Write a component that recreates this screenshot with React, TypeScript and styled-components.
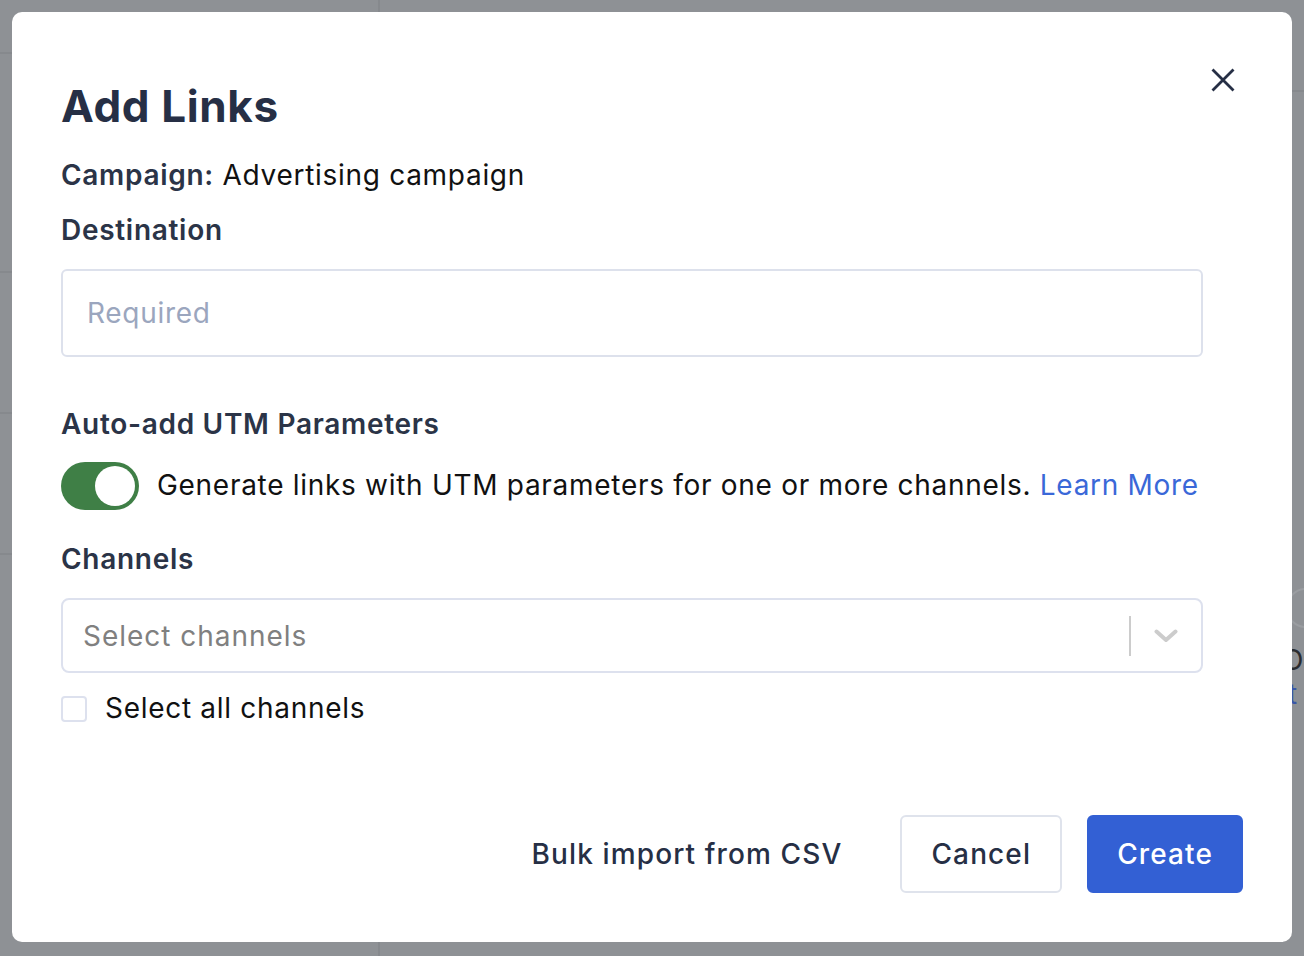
import styled, { createGlobalStyle } from "styled-components";

const GlobalStyle = createGlobalStyle`
  html, body {
    margin: 0;
    padding: 0;
  }
  body {
    font-family: Inter, Lato, "Liberation Sans", sans-serif;
    letter-spacing: 0.044em;
    background: #8e9195;
    overflow: hidden;
  }
`;

const App = () => {
  return (
    <>
      <GlobalStyle />
      <Backdrop>
        <Sidebar>
          <SideRow $h={52} />
          <SideRow $h={217} />
          <SideRow $h={139} />
          <SideRow $h={139} />
        </Sidebar>
        <Main>
          <MainTop />
          <Peek>
            <PeekRing />
            <PeekText>O</PeekText>
            <PeekLink>t</PeekLink>
          </Peek>
        </Main>
      </Backdrop>

      <Modal role="dialog" aria-labelledby="add-links-title">
        <Header>
          <Title id="add-links-title">Add Links</Title>
          <CloseButton aria-label="Close">
            <svg width="24" height="24" viewBox="0 0 24 24" fill="none">
              <path d="M1.5 1.5L22.5 22.5M22.5 1.5L1.5 22.5" stroke="#262f45" strokeWidth="2.8" />
            </svg>
          </CloseButton>
        </Header>

        <Body>
          <Campaign>
            <strong>Campaign:</strong> Advertising campaign
          </Campaign>

          <Label $gap={22}>Destination</Label>
          <TextInput placeholder="Required" />

          <Label $gap={51}>Auto-add UTM Parameters</Label>
          <ToggleRow>
            <Toggle role="switch" aria-checked="true">
              <Knob />
            </Toggle>
            <Hint>
              Generate links with UTM parameters for one or more channels.{" "}
              <LearnMore href="#">Learn More</LearnMore>
            </Hint>
          </ToggleRow>

          <Label $gap={33}>Channels</Label>
          <Select>
            <Placeholder>Select channels</Placeholder>
            <Separator />
            <ChevronBox>
              <svg width="24" height="14" viewBox="0 0 24 14" fill="none">
                <path d="M2.5 2.5L12 11L21.5 2.5" stroke="#cccccc" strokeWidth="4" strokeLinecap="round" strokeLinejoin="round" />
              </svg>
            </ChevronBox>
          </Select>

          <CheckRow>
            <CheckBox />
            <span>Select all channels</span>
          </CheckRow>
        </Body>

        <Footer>
          <Button $variant="text">Bulk import from CSV</Button>
          <Button $variant="outline">Cancel</Button>
          <Button $variant="primary">Create</Button>
        </Footer>
      </Modal>
    </>
  );
};

const Backdrop = styled.div`
  display: flex;
  height: 956px;
  background: #8e9195;
`;

const Sidebar = styled.aside`
  width: 378px;
  flex-shrink: 0;
  border-right: 2px solid #86898d;
  display: flex;
  flex-direction: column;
`;

const SideRow = styled.div<{ $h: number }>`
  height: ${(p) => p.$h}px;
  flex-shrink: 0;
  border-bottom: 2px solid #86898d;
`;

const Main = styled.main`
  flex: 1;
  display: flex;
  flex-direction: column;
  align-items: flex-end;
`;

const MainTop = styled.div`
  align-self: stretch;
  height: 90px;
  border-bottom: 2px solid #86898d;
`;

const Peek = styled.div`
  margin-top: 496px;
  width: 22px;
  display: flex;
  flex-direction: column;
  font-size: 28px;
  line-height: 1.2;
`;

const PeekRing = styled.div`
  width: 36px;
  height: 36px;
  border-radius: 50%;
  border: 2px solid #9a9da1;
  margin-left: 4px;
`;

const PeekText = styled.span`
  color: #2a2c30;
  margin-top: 16px;
`;

const PeekLink = styled.span`
  color: #3a57a8;
  margin-left: 6px;
`;

const Modal = styled.div`
  position: fixed;
  top: 12px;
  left: 12px;
  width: 1280px;
  height: 930px;
  box-sizing: border-box;
  padding: 0 49px 49px 49px;
  background: #ffffff;
  border-radius: 10px;
  display: flex;
  flex-direction: column;
`;

const Header = styled.div`
  display: flex;
  justify-content: space-between;
  align-items: flex-start;
  padding-top: 52px;
`;

const Title = styled.h1`
  margin: 16px 0 0;
  font-size: 44px;
  line-height: 1.2;
  font-weight: 700;
  letter-spacing: 0.014em;
  color: #262f45;
`;

const CloseButton = styled.button`
  width: 32px;
  height: 32px;
  margin-right: 4px;
  padding: 0;
  border: none;
  background: none;
  display: flex;
  align-items: center;
  justify-content: center;
  cursor: pointer;
`;

const Body = styled.div`
  display: flex;
  flex-direction: column;
  padding-right: 40px;
`;

const Campaign = styled.p`
  margin: 26px 0 0;
  font-size: 28px;
  line-height: 1.2;
  color: #111111;

  strong {
    font-weight: 600;
    color: #2b3447;
  }
`;

const Label = styled.h3<{ $gap: number }>`
  margin: ${(p) => p.$gap}px 0 0;
  font-size: 28px;
  line-height: 1.2;
  font-weight: 600;
  color: #2b3447;
`;

const TextInput = styled.input`
  margin-top: 21px;
  height: 88px;
  box-sizing: border-box;
  border: 2px solid #dde1ec;
  border-radius: 6px;
  padding: 0 24px;
  font-family: inherit;
  font-size: 28px;
  letter-spacing: inherit;
  color: #111111;
  outline: none;

  &::placeholder {
    color: #9ba6be;
  }
`;

const ToggleRow = styled.div`
  margin-top: 20px;
  display: flex;
  align-items: center;
  gap: 18px;
`;

const Toggle = styled.button`
  width: 78px;
  height: 48px;
  flex-shrink: 0;
  border: none;
  border-radius: 24px;
  background: #3f7f46;
  padding: 0 4px;
  display: flex;
  align-items: center;
  justify-content: flex-end;
  cursor: pointer;
`;

const Knob = styled.span`
  width: 40px;
  height: 40px;
  border-radius: 50%;
  background: #ffffff;
`;

const Hint = styled.p`
  margin: 0;
  font-size: 28px;
  line-height: 1.2;
  color: #111111;
`;

const LearnMore = styled.a`
  color: #3a68d8;
  text-decoration: none;
`;

const Select = styled.div`
  margin-top: 22px;
  height: 75px;
  box-sizing: border-box;
  border: 2px solid #dde1ee;
  border-radius: 8px;
  display: flex;
  align-items: center;
`;

const Placeholder = styled.span`
  flex: 1;
  padding-left: 20px;
  font-size: 28px;
  letter-spacing: 0.035em;
  color: #808080;
`;

const Separator = styled.span`
  width: 2px;
  height: 40px;
  background: #cccccc;
`;

const ChevronBox = styled.span`
  width: 70px;
  display: flex;
  justify-content: center;
  align-items: center;
`;

const CheckRow = styled.label`
  margin-top: 19px;
  display: flex;
  align-items: center;
  gap: 18px;
  font-size: 28px;
  line-height: 1.2;
  color: #111111;
`;

const CheckBox = styled.span`
  width: 26px;
  height: 26px;
  box-sizing: border-box;
  border: 2px solid #dde1ee;
  border-radius: 4px;
  background: #ffffff;
`;

const Footer = styled.div`
  margin-top: auto;
  display: flex;
  justify-content: flex-end;
  align-items: center;
  gap: 25px;
`;

const buttonPadding = { text: "0 31px", outline: "0 29px", primary: "0 28px" };

const Button = styled.button<{ $variant: "text" | "outline" | "primary" }>`
  height: 78px;
  box-sizing: border-box;
  border-radius: 6px;
  font-family: inherit;
  font-size: 28px;
  font-weight: 500;
  letter-spacing: 0.04em;
  cursor: pointer;
  padding: ${(p) => buttonPadding[p.$variant]};
  border: 2px solid
    ${(p) =>
      p.$variant === "primary" ? "#3360d4" : p.$variant === "outline" ? "#dfe3ec" : "transparent"};
  background: ${(p) => (p.$variant === "primary" ? "#3360d4" : "#ffffff")};
  color: ${(p) => (p.$variant === "primary" ? "#ffffff" : "#262f45")};
`;

export default App;
